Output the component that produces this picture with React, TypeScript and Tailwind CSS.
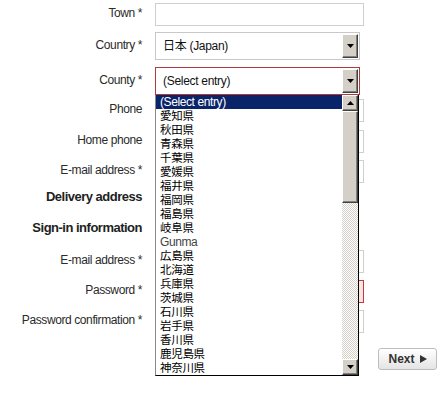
import React from "react";

const FONT = { fontFamily: '"Liberation Sans", Arial, "Noto Sans CJK JP", sans-serif' };
const CJK = { fontFamily: '"Liberation Sans", Arial, "Noto Sans CJK JP", sans-serif' };

function Tri({ up = false }: { up?: boolean }) {
  return (
    <svg width="7" height="4" viewBox="0 0 7 4" className="block">
      {up ? <path d="M3.5 0 L7 4 L0 4 Z" fill="#000" /> : <path d="M0 0 L7 0 L3.5 4 Z" fill="#000" />}
    </svg>
  );
}

function Btn3D({ up = false, className = "" }: { up?: boolean; className?: string }) {
  return (
    <div
      className={
        "flex items-center justify-center bg-[#d4d0c8] border border-t-white border-l-white border-r-[#404040] border-b-[#404040] shadow-[inset_-1px_-1px_0_#808080] " +
        className
      }
    >
      <Tri up={up} />
    </div>
  );
}

function Label({ children, bold = false }: { children: React.ReactNode; bold?: boolean }) {
  return (
    <div
      className={
        bold
          ? "w-[142px] shrink-0 text-right text-[13px] font-bold tracking-[-0.5px] text-[#222] pb-[2px]"
          : "w-[142px] shrink-0 text-right text-[12px] tracking-[-0.4px] text-[#2a2a2a] pb-[3px]"
      }
    >
      {children}
    </div>
  );
}

function Input({ error = false }: { error?: boolean }) {
  return (
    <div
      className={
        "ml-[13px] w-[209px] h-[23px] border " +
        (error ? "border-[#c0393b] bg-[#fbe4e4]" : "border-[#cfcfcf] bg-white")
      }
    />
  );
}

function Select({ text, error = false }: { text: string; error?: boolean }) {
  return (
    <div
      className={
        "ml-[13px] w-[205px] h-full border flex items-center p-px bg-white " +
        (error ? "border-[#b2393a]" : "border-[#c8c8c8]")
      }
    >
      <div className="flex-1 pl-[6px] text-[12px] tracking-[-0.3px] text-[#111]" style={CJK}>
        {text}
      </div>
      <Btn3D className="w-[16px] h-full" />
    </div>
  );
}

const items = [
  "愛知県",
  "秋田県",
  "青森県",
  "千葉県",
  "愛媛県",
  "福井県",
  "福岡県",
  "福島県",
  "岐阜県",
  "Gunma",
  "広島県",
  "北海道",
  "兵庫県",
  "茨城県",
  "石川県",
  "岩手県",
  "香川県",
  "鹿児島県",
  "神奈川県",
];

export default function App() {
  return (
    <div className="relative w-[447px] h-[402px] bg-white overflow-hidden" style={FONT}>
      <div className="flex flex-col pt-[3px]">
        <div className="flex items-center h-[23px]">
          <Label>Town *</Label>
          <Input />
        </div>
        <div className="flex items-center h-[28px] mt-[6px]">
          <Label>Country *</Label>
          <Select text="日本 (Japan)" />
        </div>
        <div className="flex items-center h-[28px] mt-[7px]">
          <Label>County *</Label>
          <Select text="(Select entry)" error />
        </div>
        <div className="flex items-center h-[23px] mt-[4px]">
          <Label>Phone</Label>
          <Input />
        </div>
        <div className="flex items-center h-[23px] mt-[8px]">
          <Label>Home phone</Label>
          <Input />
        </div>
        <div className="flex items-center h-[23px] mt-[7px]">
          <Label>E-mail address *</Label>
          <Input />
        </div>
        <div className="flex items-center h-[20px] mt-[5px]">
          <Label bold>Delivery address</Label>
        </div>
        <div className="flex items-center h-[20px] mt-[11px]">
          <Label bold>Sign-in information</Label>
        </div>
        <div className="flex items-center h-[23px] mt-[11px]">
          <Label>E-mail address *</Label>
          <Input />
        </div>
        <div className="flex items-center h-[23px] mt-[7px]">
          <Label>Password *</Label>
          <Input error />
        </div>
        <div className="flex items-center h-[23px] mt-[7px]">
          <Label>Password confirmation *</Label>
          <Input />
        </div>
        <div className="flex justify-end pr-[10px] mt-[15px]">
          <button className="w-[59px] h-[22px] rounded-[3px] border border-[#bdbdbd] bg-gradient-to-b from-white to-[#e4e4e4] text-[12px] font-bold text-[#333] flex items-center justify-center gap-[5px]">
            <span>Next</span>
            <svg width="7" height="8" viewBox="0 0 7 8" className="block">
              <path d="M0 0 L7 4 L0 8 Z" fill="#333" />
            </svg>
          </button>
        </div>
      </div>

      {/* open dropdown list */}
      <div className="absolute left-[155px] top-[95px] w-[204px] h-[281px] bg-white border-l border-l-[#8a8a8a] border-r border-r-black border-b border-b-black flex">
        <div className="flex-1 flex flex-col" style={CJK}>
          <div className="h-[14px] leading-[14px] bg-[#0a246a] text-white text-[12px] tracking-[-0.4px] pl-[4px]">
            (Select entry)
          </div>
          {items.map((it) => (
            <div
              key={it}
              className={
                "h-[14px] leading-[14px] pl-[4px] " +
                (it === "Gunma" ? "text-[12px] tracking-[-0.4px] text-[#444]" : "text-[11.5px] tracking-[-0.3px] text-black")
              }
            >
              {it}
            </div>
          ))}
        </div>
        <div className="w-[16px] flex flex-col">
          <Btn3D up className="h-[16px] w-[16px]" />
          <div className="h-[92px] bg-[#d4d0c8] border border-t-white border-l-white border-r-[#404040] border-b-[#404040] shadow-[inset_-1px_-1px_0_#808080]" />
          <div className="flex-1 bg-[image:repeating-conic-gradient(#d4d0c8_0%_25%,#ffffff_0%_50%)] bg-[length:2px_2px]" />
          <Btn3D className="h-[16px] w-[16px]" />
        </div>
      </div>
    </div>
  );
}
